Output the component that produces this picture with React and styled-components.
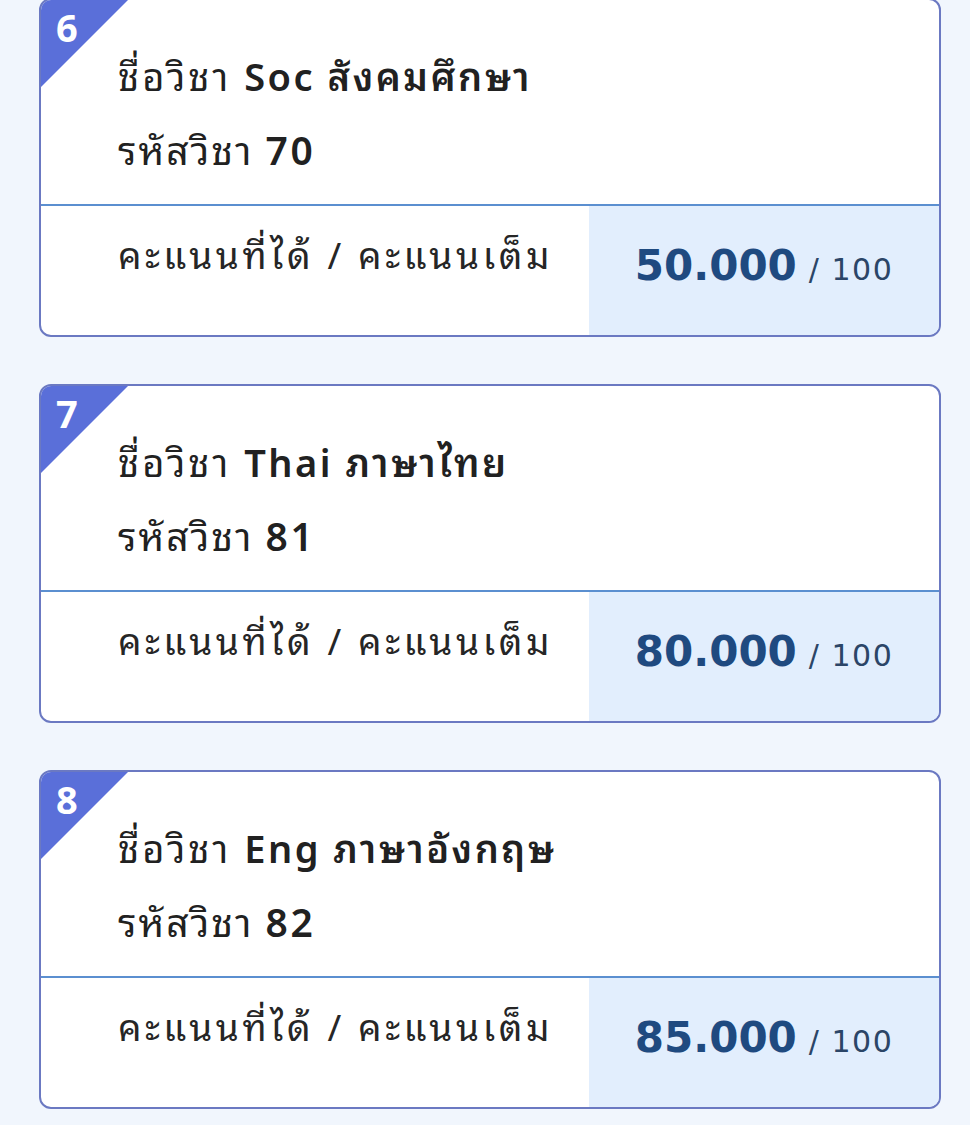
import styled, { createGlobalStyle } from "styled-components";

const subjects = [
  { no: 6, label: "Soc", name: "สังคมศึกษา", code: "70", score: "50.000", full: 100 },
  { no: 7, label: "Thai", name: "ภาษาไทย", code: "81", score: "80.000", full: 100 },
  { no: 8, label: "Eng", name: "ภาษาอังกฤษ", code: "82", score: "85.000", full: 100 },
];

const App = () => {
  return (
    <>
      <GlobalStyle />
      <List>
        {subjects.map((s) => (
          <Card key={s.no}>
            <Corner>
              <CornerNo>{s.no}</CornerNo>
            </Corner>
            <Head>
              <Line size={38} spacing={3}>
                ชื่อวิชา <Strong>{s.label} {s.name}</Strong>
              </Line>
              <Line size={39} spacing={2}>
                รหัสวิชา <Strong>{s.code}</Strong>
              </Line>
            </Head>
            <Foot>
              <FootLabel>คะแนนที่ได้ / คะแนนเต็ม</FootLabel>
              <ScoreCell>
                <Score>{s.score}</Score>
                <Full>/ {s.full}</Full>
              </ScoreCell>
            </Foot>
          </Card>
        ))}
      </List>
    </>
  );
};

const GlobalStyle = createGlobalStyle`
  body {
    margin: 0;
    background: #f1f6fd;
    font-family: "Noto Sans", "Noto Sans Thai Looped", "Noto Sans Thai", sans-serif;
    font-weight: 400;
    color: #212121;
  }
`;

const List = styled.div`
  display: flex;
  flex-direction: column;
  gap: 47px;
  margin-top: -2px;
  padding: 0 29px 40px 39px;
`;

const Card = styled.div`
  position: relative;
  background: #fff;
  border: 2px solid #6b79c2;
  border-radius: 12px;
  overflow: hidden;
`;

const Corner = styled.div`
  position: absolute;
  top: 0;
  left: 0;
  width: 87px;
  height: 87px;
  background: #5a6fd9;
  clip-path: polygon(0 0, 100% 0, 0 100%);
`;

const CornerNo = styled.span`
  position: absolute;
  top: 5px;
  left: 15px;
  color: #fff;
  font-size: 38px;
  font-weight: 700;
  line-height: 1.2;
`;

const Head = styled.div`
  height: 206px;
  box-sizing: border-box;
  padding: 40px 0 0 77px;
  border-bottom: 2px solid #5b8fd0;
`;

const Line = styled.div`
  font-size: ${(p) => p.size}px;
  font-weight: 400;
  line-height: 73px;
  letter-spacing: ${(p) => p.spacing}px;
  white-space: nowrap;
`;

const Strong = styled.span`
  font-weight: 600;
  letter-spacing: 2.5px;
`;

const Foot = styled.div`
  display: flex;
  height: 129px;
`;

const FootLabel = styled.div`
  flex: 1;
  padding: 19px 0 0 77px;
  font-size: 37px;
  font-weight: 400;
  line-height: 60px;
  letter-spacing: 3.6px;
  color: #262626;
  white-space: nowrap;
`;

const ScoreCell = styled.div`
  width: 350px;
  background: #e2eefd;
  display: flex;
  justify-content: center;
  align-items: baseline;
  gap: 12px;
  padding-top: 32px;
  box-sizing: border-box;
`;

const Score = styled.span`
  font-family: "DejaVu Sans", sans-serif;
  font-size: 42px;
  font-weight: 700;
  color: #1f4a80;
  line-height: 56px;
`;

const Full = styled.span`
  font-family: "DejaVu Sans", sans-serif;
  font-size: 30px;
  letter-spacing: 1.5px;
  color: #2b4567;
`;

export default App;
